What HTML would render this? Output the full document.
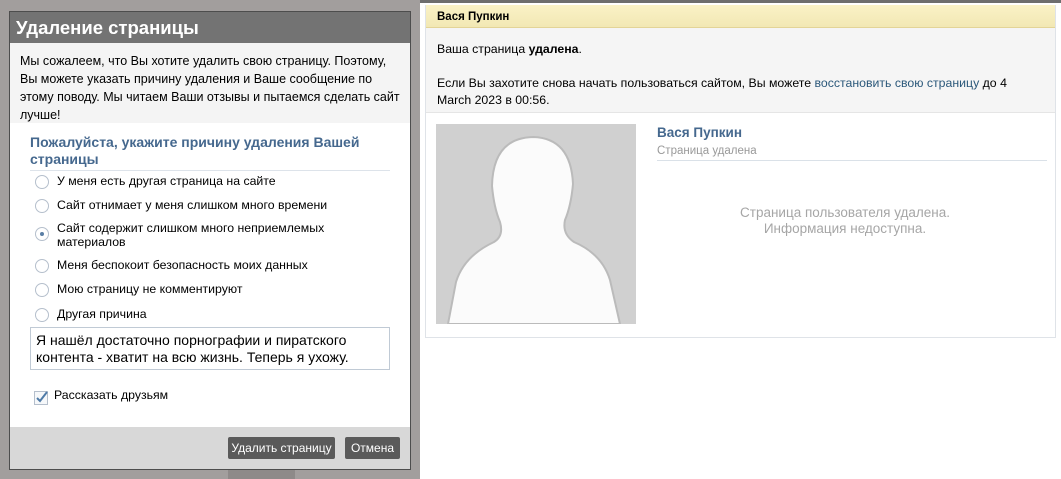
<!DOCTYPE html>
<html><head><meta charset="utf-8"><style>
*{margin:0;padding:0;box-sizing:border-box}
html,body{width:1061px;height:479px;overflow:hidden}
body{position:relative;background:#fff;font-family:"Liberation Sans",sans-serif;font-size:12px;color:#000}
.ov{position:absolute;left:0;top:0;width:420px;height:479px;background:#a29e9d}
.top{position:absolute;left:420px;top:0;width:641px;height:3px;background:#6e6e6e}
.dlg{position:absolute;left:9px;top:11px;width:402px;height:459px;background:#fff;border:1px solid #4d4d4d}
.tt{height:31px;background:#737373;color:#fff;font-size:18.5px;font-weight:bold;padding:5px 0 0 6px}
.intro{background:#f4f4f4;height:80px;padding:9px 10px 0 10px;line-height:18px;font-size:12.5px}
.h{position:absolute;left:20px;top:122px;width:360px;color:#45688e;font-weight:bold;font-size:14px;line-height:17px;border-bottom:1px solid #dde3ea;padding-bottom:2px}
.r{position:absolute;left:25px;font-size:12.3px;line-height:14px}
.r i{position:absolute;left:0;top:1px;width:14px;height:14px;border:1px solid #b5bfcc;border-radius:50%;background:#fff}
.r i.on:after{content:"";position:absolute;left:4px;top:4px;width:4px;height:4px;border-radius:50%;background:#5b7fa6}
.r span{position:absolute;left:22px;top:0;white-space:nowrap}
.ta{position:absolute;left:20px;top:315px;width:360px;height:43px;border:1px solid #c0cad5;padding:4px 5px;font-size:14px;line-height:17px;white-space:nowrap}
.cb{position:absolute;left:24px;top:379px;width:14px;height:14px;border:1px solid #b5bfcc;background:#f6f8fa}
.ft{position:absolute;left:0;bottom:0;width:400px;height:42px;background:#d8d8d8}
.b{position:absolute;top:10px;height:22px;background:#5a5a5a;color:#fff;border-radius:2px;font-size:12px;line-height:22px;text-align:center;white-space:nowrap}
.card{position:absolute;left:425px;top:5px;width:631px;height:333px;border:1px solid #dfe3e8;border-top:0;background:#fff}
.yh{height:23px;background:linear-gradient(#faf2c6,#f2e8b4);border-bottom:1px solid #e3d497;font-weight:bold;font-size:11.5px;padding:6px 0 0 11px}
.gs{height:85px;background:#f5f5f5;border-bottom:1px solid #e5e5e5;padding:13px 0 0 11px;font-size:12.3px;line-height:17px}
a{color:#2b587a;text-decoration:none}
</style></head><body>
<div class="ov"></div><div class="top"></div>
<div style="position:absolute;left:228px;top:465px;width:67px;height:14px;background:#8e8a89;border-radius:2px 2px 0 0"></div>
<div class="dlg">
<div class="tt">Удаление страницы</div>
<div class="intro">Мы сожалеем, что Вы хотите удалить свою страницу. Поэтому,<br>Вы можете указать причину удаления и Ваше сообщение по<br>этому поводу. Мы читаем Ваши отзывы и пытаемся сделать сайт<br>лучше!</div>
<div class="h">Пожалуйста, укажите причину удаления Вашей<br>страницы</div>
<div class="r" style="top:162px"><i></i><span>У меня есть другая страница на сайте</span></div>
<div class="r" style="top:186px"><i></i><span>Сайт отнимает у меня слишком много времени</span></div>
<div class="r" style="top:209px"><i class="on" style="top:6px"></i><span>Сайт содержит слишком много неприемлемых<br>материалов</span></div>
<div class="r" style="top:246px"><i></i><span>Меня беспокоит безопасность моих данных</span></div>
<div class="r" style="top:270px"><i></i><span>Мою страницу не комментируют</span></div>
<div class="r" style="top:295px"><i></i><span>Другая причина</span></div>
<div class="ta">Я нашёл достаточно порнографии и пиратского<br>контента - хватит на всю жизнь. Теперь я ухожу.</div>
<div class="cb"><svg width="14" height="14" style="position:absolute;left:0;top:-2px"><path d="M2 8 L5 11 L12 2" stroke="#4f7ba8" stroke-width="2" fill="none"/></svg></div>
<div class="r" style="left:44px;top:376px">Рассказать друзьям</div>
<div class="ft"><div class="b" style="left:218px;width:107px">Удалить страницу</div><div class="b" style="left:335px;width:55px">Отмена</div></div>
</div>
<div class="card">
<div class="yh">Вася Пупкин</div>
<div class="gs">Ваша страница <b>удалена</b>.<br><br>Если Вы захотите снова начать пользоваться сайтом, Вы можете <a>восстановить свою страницу</a> до 4<br>March 2023 в 00:56.</div>
<div style="position:absolute;left:10px;top:119px;width:200px;height:200px;background:#d0d0d0;overflow:hidden">
<svg width="200" height="200"><path d="M12 200 L20 158 Q28 132 58 118 Q68 112 64 98 Q58 84 56 62 Q57 14 97 13 Q135 14 137 60 Q135 82 129 96 Q126 110 138 118 Q166 130 174 156 L184 200 Z" fill="#fbfbfb" stroke="#bbb" stroke-width="2"/></svg></div>
<div style="position:absolute;left:231px;top:120px;font-weight:bold;font-size:13.5px;color:#45688e">Вася Пупкин</div>
<div style="position:absolute;left:231px;top:140px;width:390px;font-size:11.5px;color:#999;border-bottom:1px solid #dae1e8;padding-bottom:3px">Страница удалена</div>
<div style="position:absolute;left:231px;top:200px;width:376px;text-align:center;font-size:13.5px;color:#a6a6a6;line-height:16px">Страница пользователя удалена.<br>Информация недоступна.</div>
</div>
</body></html>
